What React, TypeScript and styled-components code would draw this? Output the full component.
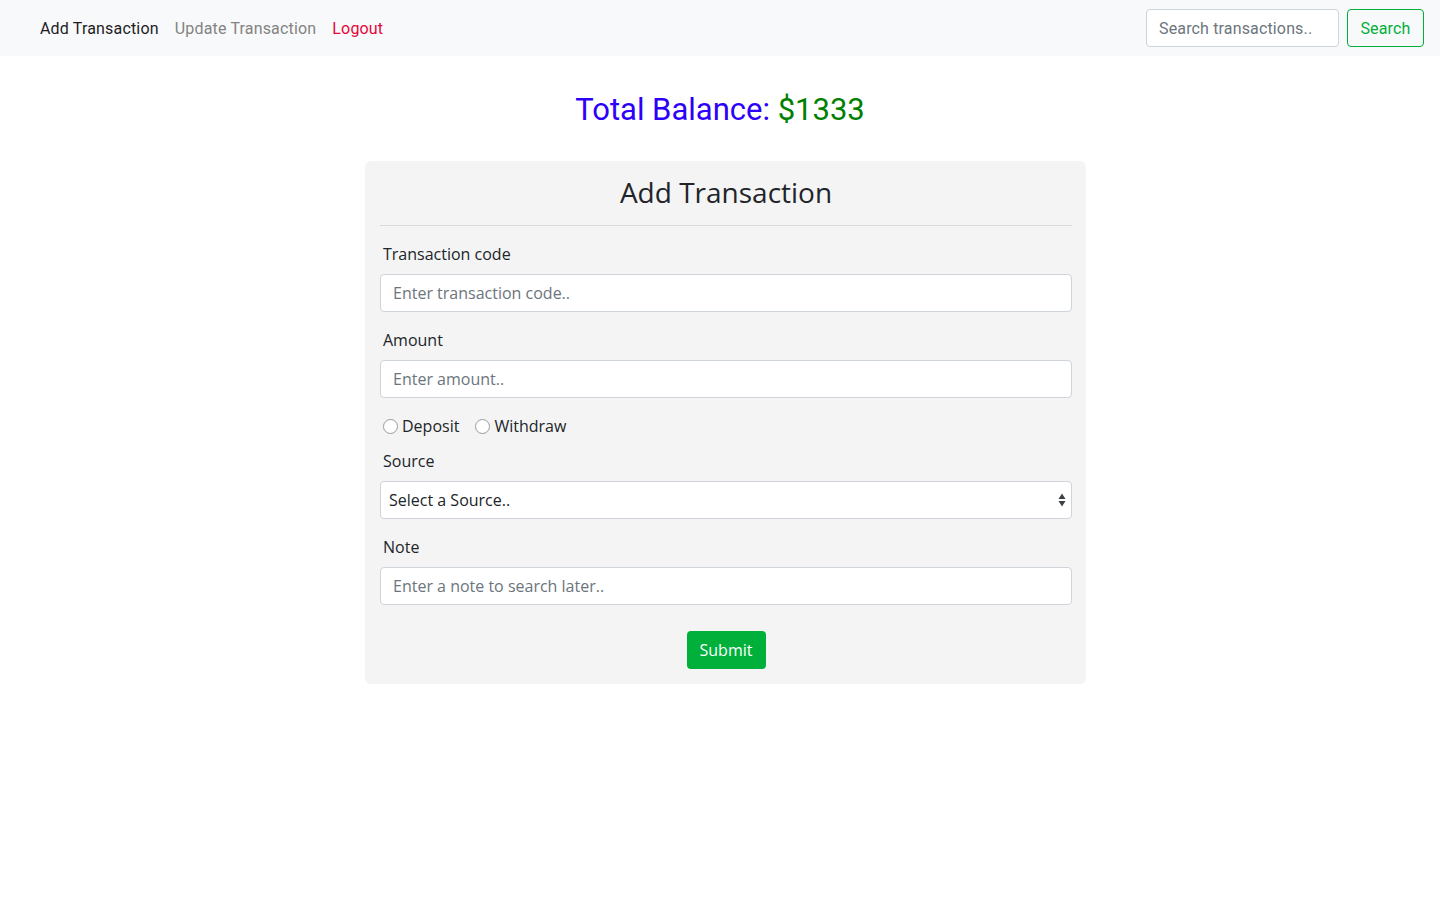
import React from "react";
import styled, { createGlobalStyle } from "styled-components";

const GlobalStyle = createGlobalStyle`
  * { box-sizing: border-box; }
  body {
    margin: 0;
    background: #ffffff;
    font-family: Roboto, "Liberation Sans", Arial, sans-serif;
    color: #212529;
  }
`;

const Navbar = styled.nav`
  height: 56px;
  background: #f8f9fa;
  display: flex;
  align-items: center;
  justify-content: space-between;
  padding: 0 16px 0 32px;
`;

const NavLinks = styled.div`
  display: flex;
  align-items: center;
  padding-top: 2px;
`;

const NavLink = styled.a<{ $tone: "active" | "muted" | "danger" }>`
  padding: 0 8px;
  font-size: 16px;
  line-height: 24px;
  letter-spacing: 0.17px;
  text-decoration: none;
  cursor: pointer;
  color: ${(p) =>
    p.$tone === "active" ? "#1d1d1f" : p.$tone === "muted" ? "#838383" : "#e5063c"};
`;

const SearchForm = styled.form`
  display: flex;
  align-items: center;
  gap: 8px;
`;

const SearchInput = styled.input`
  width: 193px;
  height: 38px;
  padding: 6px 12px;
  border: 1px solid #ced4da;
  border-radius: 4px;
  background: #fff;
  font-family: Roboto, "Liberation Sans", Arial, sans-serif;
  font-size: 16px;
  letter-spacing: 0.15px;
  color: #212529;
  &::placeholder { color: #6c757d; }
  outline: none;
`;

const OutlineButton = styled.button`
  width: 77px;
  height: 38px;
  padding: 0;
  border: 1px solid #00b03b;
  border-radius: 4px;
  background: transparent;
  color: #00b03b;
  font-family: Roboto, "Liberation Sans", Arial, sans-serif;
  font-size: 16px;
  letter-spacing: 0.15px;
`;

const Balance = styled.h1`
  margin: 35px 0 0;
  text-align: center;
  font-size: 31px;
  line-height: 38px;
  font-weight: 400;
`;

const BalanceLabel = styled.span`
  color: #2d00f7;
`;

const BalanceValue = styled.span`
  color: #008000;
`;

const CardRow = styled.div`
  display: flex;
  justify-content: center;
  padding-left: 11px;
  margin-top: 32px;
`;

const Card = styled.div`
  width: 721px;
  background: #f4f4f4;
  border-radius: 6px;
  padding: 14px 14px 15px 15px;
  font-family: "Open Sans", "Liberation Sans", Arial, sans-serif;
  display: flex;
  flex-direction: column;
`;

const CardTitle = styled.h2`
  margin: 0;
  text-align: center;
  font-size: 28px;
  line-height: 34px;
  font-weight: 400;
  color: #212529;
`;

const Divider = styled.hr`
  margin: 16px 0 0;
  border: 0;
  border-top: 1px solid #d9d9d9;
`;

const Field = styled.div<{ $gap?: number }>`
  display: flex;
  flex-direction: column;
  margin-top: ${(p) => p.$gap ?? 16}px;
`;

const Label = styled.label`
  padding-left: 3px;
  font-size: 16px;
  line-height: 24px;
  margin-bottom: 8px;
  color: #212529;
`;

const TextInput = styled.input`
  width: 100%;
  height: 38px;
  padding: 6px 12px;
  border: 1px solid #ced4da;
  border-radius: 4px;
  background: #fff;
  font-family: "Open Sans", "Liberation Sans", Arial, sans-serif;
  font-size: 16px;
  color: #212529;
  outline: none;
  &::placeholder { color: #6c757d; }
`;

const SelectWrap = styled.div`
  position: relative;
  height: 38px;
  border: 1px solid #ced4da;
  border-radius: 4px;
  background: #fff;
  display: flex;
  align-items: center;
  padding: 0 8px;
  font-size: 16px;
  color: #212529;
`;

const SelectArrows = styled.svg`
  position: absolute;
  right: 3px;
  top: 50%;
  transform: translateY(-50%);
`;

const RadioRow = styled.div`
  display: flex;
  align-items: center;
  gap: 16px;
  margin-top: 16px;
  padding-left: 3px;
  height: 24px;
`;

const RadioOption = styled.label`
  display: flex;
  align-items: center;
  gap: 4px;
  font-size: 16px;
  line-height: 24px;
  color: #212529;
`;

const RadioCircle = styled.span`
  width: 15px;
  height: 15px;
  border-radius: 50%;
  border: 1px solid #9a9a9a;
  background: #fff;
  margin-top: 1px;
`;

const SubmitRow = styled.div`
  display: flex;
  justify-content: center;
  margin-top: 26px;
`;

const SubmitButton = styled.button`
  width: 79px;
  height: 38px;
  padding: 0;
  border: 0;
  border-radius: 4px;
  background: #00b03b;
  color: #fff;
  font-family: "Open Sans", "Liberation Sans", Arial, sans-serif;
  font-size: 16px;
`;

export default function App() {
  return (
    <>
      <GlobalStyle />
      <Navbar>
        <NavLinks>
          <NavLink $tone="active">Add Transaction</NavLink>
          <NavLink $tone="muted">Update Transaction</NavLink>
          <NavLink $tone="danger">Logout</NavLink>
        </NavLinks>
        <SearchForm onSubmit={(e) => e.preventDefault()}>
          <SearchInput placeholder="Search transactions.." />
          <OutlineButton type="submit">Search</OutlineButton>
        </SearchForm>
      </Navbar>
      <Balance>
        <BalanceLabel>Total Balance: </BalanceLabel>
        <BalanceValue>$1333</BalanceValue>
      </Balance>
      <CardRow>
        <Card>
          <CardTitle>Add Transaction</CardTitle>
          <Divider />
          <Field>
            <Label>Transaction code</Label>
            <TextInput placeholder="Enter transaction code.." />
          </Field>
          <Field>
            <Label>Amount</Label>
            <TextInput placeholder="Enter amount.." />
          </Field>
          <RadioRow>
            <RadioOption>
              <RadioCircle />
              Deposit
            </RadioOption>
            <RadioOption>
              <RadioCircle />
              Withdraw
            </RadioOption>
          </RadioRow>
          <Field $gap={11}>
            <Label>Source</Label>
            <SelectWrap>
              Select a Source..
              <SelectArrows width="12" height="18" viewBox="0 0 12 18">
                <path d="M6 2.5 L9.5 8 L2.5 8 Z" fill="#3c4043" />
                <path d="M6 15.5 L9.5 10 L2.5 10 Z" fill="#3c4043" />
              </SelectArrows>
            </SelectWrap>
          </Field>
          <Field>
            <Label>Note</Label>
            <TextInput placeholder="Enter a note to search later.." />
          </Field>
          <SubmitRow>
            <SubmitButton>Submit</SubmitButton>
          </SubmitRow>
        </Card>
      </CardRow>
    </>
  );
}
